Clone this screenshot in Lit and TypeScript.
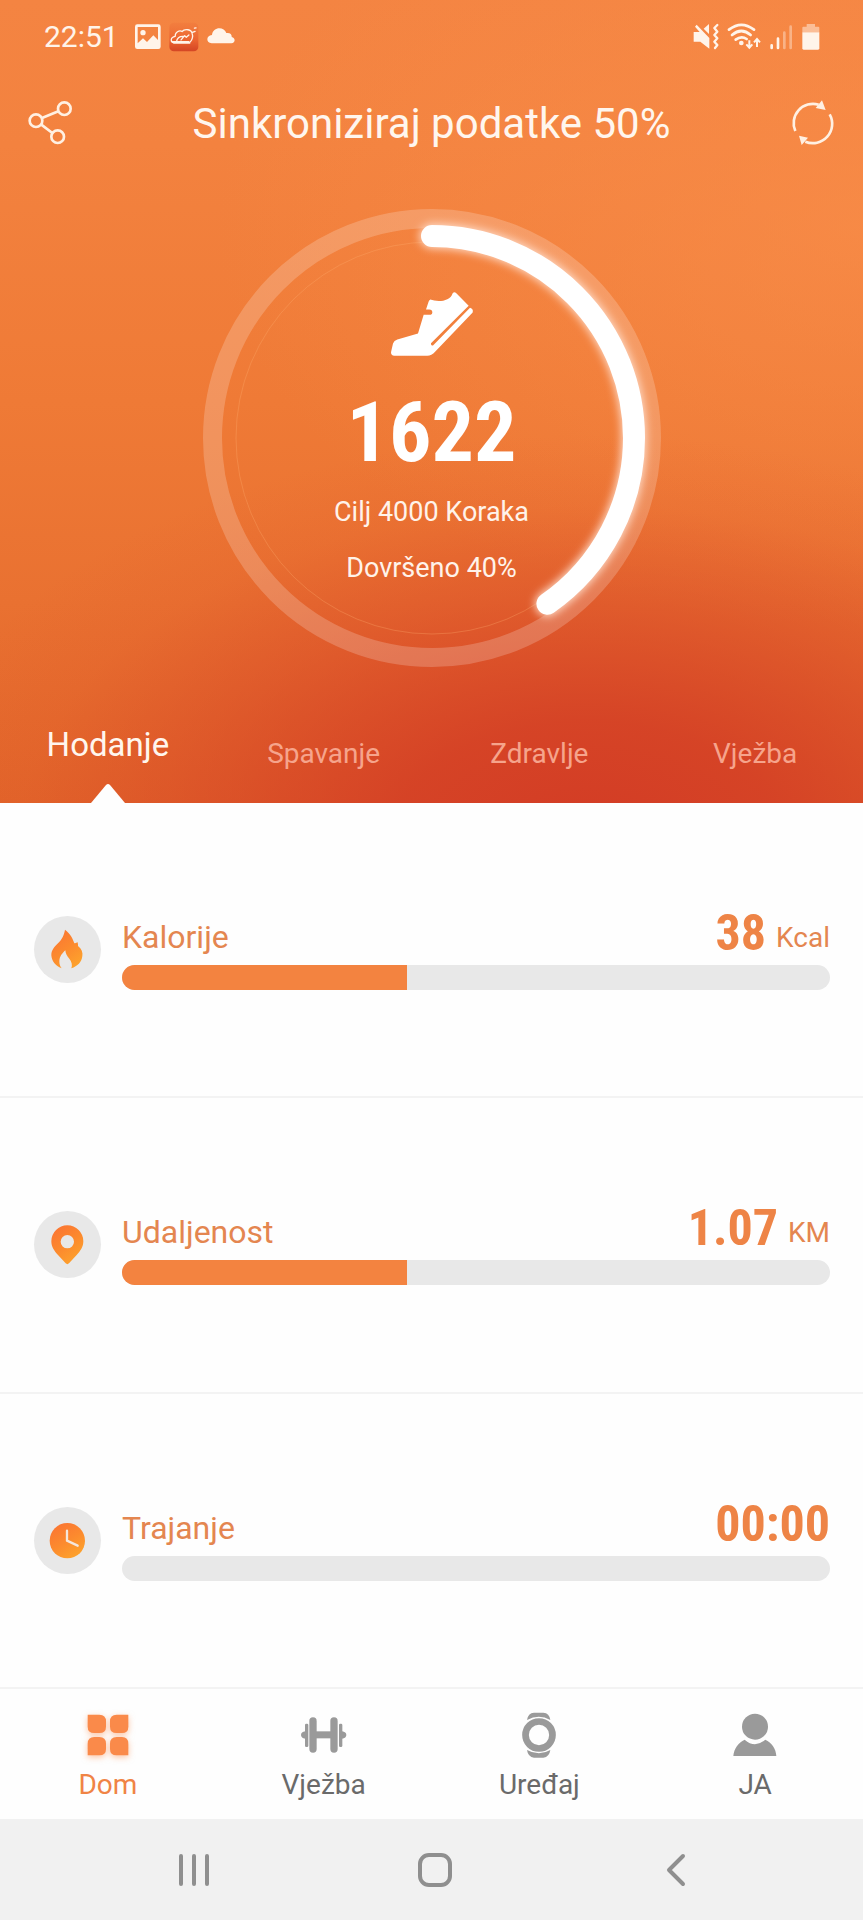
import { LitElement, html, css, svg } from "lit";
import { customElement, property, state } from "lit/decorators.js";
import { classMap } from "lit/directives/class-map.js";

const palette = css`
  :host {
    --orange: #f38340;
    --label: #e48650;
    --track: #e8e8e8;
  }
  * {
    box-sizing: border-box;
  }
  svg {
    display: block;
    flex: none;
  }
  button {
    margin: 0;
    padding: 0;
    border: 0;
    background: none;
    color: inherit;
    font: inherit;
    cursor: pointer;
  }
`;

@customElement("status-bar")
class StatusBar extends LitElement {
  static styles = [
    palette,
    css`
      :host {
        display: flex;
        justify-content: space-between;
        align-items: center;
        height: 74px;
        padding: 0 42px 0 44px;
        color: #fff4ea;
        font-size: 30px;
        line-height: 36px;
      }
      .group {
        display: flex;
        align-items: center;
        gap: 8px;
      }
      .time {
        margin-right: 8px;
      }
    `,
  ];

  render() {
    return html`
      <div class="group">
        <span class="time">22:51</span>
        <svg width="26" height="26" viewBox="401 71 78 76" aria-hidden="true">
          <path fill="#fff4ea" fill-rule="evenodd" d="M408 71H471Q478 71 478 78V138Q478 145 471 145H408Q401 145 401 138V78Q401 71 408 71ZM409 79V128L425 113L437 124L456 104L470 118V79Z" />
          <circle cx="425" cy="96" r="8" fill="#fff4ea" />
        </svg>
        <svg width="30" height="30" viewBox="508 66 92 90" aria-hidden="true">
          <defs>
            <linearGradient id="app" x1="0" y1="0" x2="0" y2="1">
              <stop offset="0" stop-color="#ee7038" stop-opacity="0.3" />
              <stop offset="0.6" stop-color="#ec6430" />
              <stop offset="1" stop-color="#d44524" />
            </linearGradient>
          </defs>
          <rect x="509" y="67" width="89" height="88" rx="14" fill="url(#app)" />
          <path fill="none" stroke="#fff4ea" stroke-width="4" stroke-linecap="round" stroke-linejoin="round" d="M571 129H523C512 127 511 112 527 109C526 96 540 89 548 94C557 84 577 88 579 100C582 108 580 120 573 126M531 125C533 113 543 108 554 109M545 120L556 107L561 112L569 105M580 97L588 94M586 84L591 83" />
          <path fill="#fff4ea" d="M514 123H570L574 131H522Z" />
        </svg>
        <svg width="28" height="20" viewBox="623 80 84 60" aria-hidden="true">
          <path fill="#fff4ea" d="M637 129C619 127 620 105 638 104C640 79 674 77 681 98C693 96 698 103 697 110C709 112 709 129 696 129Z" />
        </svg>
      </div>
      <div class="group">
        <svg width="26" height="28" viewBox="790 69 78 82" aria-hidden="true">
          <path fill="#fff4ea" d="M792 95H810L796 79L801 73L839 113V145L812 124H792ZM822 85L838 71V101Z" />
          <path fill="none" stroke="#fff4ea" stroke-width="7" stroke-linecap="round" stroke-linejoin="round" d="M863 74L854 83L863 94L854 104L863 114L854 124L863 134L856 143" />
        </svg>
        <svg width="34" height="28" viewBox="895 69 102 82" aria-hidden="true">
          <g fill="none" stroke="#fff4ea" stroke-width="8" stroke-linecap="round">
            <path d="M901 88Q938 59 976 88" />
            <path d="M910 104Q938 80 966 104" />
            <path d="M921 118Q938 105 954 116" />
          </g>
          <circle cx="938" cy="128" r="7" fill="#fff4ea" />
          <path fill="none" stroke="#fff4ea" stroke-width="6" d="M962 120V141M953 132L962 142L971 132M985 140V117M976 126L985 116L994 126" />
        </svg>
        <svg width="24" height="28" viewBox="1013 69 72 82" aria-hidden="true">
          <g stroke="#fff4ea" stroke-width="8" stroke-linecap="round">
            <path d="M1021 135V143M1040 115V143" />
            <path opacity="0.4" d="M1059 97V143M1078 79V143" />
          </g>
        </svg>
        <svg width="20" height="28" viewBox="1111 69 60 82" aria-hidden="true">
          <path fill="#fff4ea" opacity="0.5" d="M1128 71H1153V79H1163Q1166 79 1166 82V96H1115V82Q1115 79 1118 79H1128Z" />
          <path fill="#fff4ea" d="M1115 96H1166V144Q1166 148 1162 148H1119Q1115 148 1115 144Z" />
        </svg>
      </div>
    `;
  }
}

@customElement("step-ring")
class StepRing extends LitElement {
  @property({ type: Number }) steps = 0;
  @property({ type: Number }) goal = 0;
  @property({ type: Number }) percent = 0;

  static styles = [
    palette,
    css`
      :host {
        display: grid;
        width: 458px;
        max-width: 100%;
        color: #fff3ea;
      }
      .ring,
      .content {
        grid-area: 1 / 1;
      }
      .ring {
        width: 100%;
        height: auto;
        overflow: visible;
      }
      .content {
        display: flex;
        flex-direction: column;
        align-items: center;
        padding-top: 81px;
        font-size: 27px;
        line-height: 36px;
      }
      .steps {
        margin: 40px 0 25px;
        color: #fff;
        font-family: "Roboto Condensed", "Liberation Sans Narrow", Roboto, sans-serif;
        font-size: 84px;
        font-weight: 700;
        line-height: 72px;
      }
      .done {
        margin-top: 20px;
      }
    `,
  ];

  render() {
    const r = 202;
    const length = 2 * Math.PI * r;
    return html`
      <svg class="ring" viewBox="0 0 458 458" aria-hidden="true">
        <defs>
          <filter id="glow" x="-20%" y="-20%" width="140%" height="140%">
            <feGaussianBlur stdDeviation="4" />
          </filter>
        </defs>
        <circle cx="229" cy="229" r="219.5" fill="none" stroke="#fff" stroke-opacity="0.2" stroke-width="19" />
        <circle cx="229" cy="229" r="196" fill="none" stroke="#ffb070" stroke-opacity="0.3" stroke-width="1" />
        <g fill="none" stroke-linecap="round" transform="rotate(-90 229 229)" stroke-dasharray="${(length * this.percent) / 100} ${length}">
          <circle cx="229" cy="229" r="${r}" stroke="#ffd9c4" stroke-width="25" filter="url(#glow)" />
          <circle cx="229" cy="229" r="${r}" stroke="#fff" stroke-width="22" />
        </g>
      </svg>
      <div class="content">
        <svg width="84" height="67" viewBox="600 300 252 200" aria-hidden="true">
          <path fill="#fff" d="M721 328C742 336 780 335 788 309Q793 303 799 309L836 347L723 459Q722 466 729 466L840 353Q851 356 848 367L736 484Q724 497 712 497H613Q603 496 603 486L609 460Q612 451 622 448L684 430L701 374H722Q727 373 727 367Q727 358 718 358H708L716 334Q718 329 721 328Z" />
        </svg>
        <div class="steps">${this.steps}</div>
        <div>Cilj ${this.goal} Koraka</div>
        <div class="done">Dovršeno ${Math.floor(this.percent)}%</div>
      </div>
    `;
  }
}

const metricIcons = {
  flame: svg`
    <svg width="67" height="67" viewBox="101 108 201 201" aria-hidden="true">
      <path fill="url(#warm)" d="M194 149C212 163 218 178 222 190Q228 190 231 186Q234 192 233 198C244 207 248 218 246 228C244 247 232 258 213 265C217 255 214 245 207 236C200 228 196 222 195 211C186 220 178 228 177 243C177 252 179 259 184 265C165 257 154 243 153 226C153 210 163 200 173 190C186 177 191 165 194 149Z" />
    </svg>`,
  pin: svg`
    <svg width="67" height="67" viewBox="101 93 201 201" aria-hidden="true">
      <path fill="url(#warm)" fill-rule="evenodd" d="M201 136A48 48 0 0 1 249 184C249 201 240 213 229 225L206 250Q201 255 196 250L173 225C162 213 153 201 153 184A48 48 0 0 1 201 136ZM201 165A20 20 0 1 0 201 205A20 20 0 1 0 201 165Z" />
    </svg>`,
  clock: svg`
    <svg width="67" height="67" viewBox="101 978 201 201" aria-hidden="true">
      <circle cx="201" cy="1079" r="53" fill="url(#warm)" />
      <path fill="none" stroke="#f4e6dc" stroke-width="7" stroke-linecap="round" stroke-linejoin="round" d="M200 1049V1079L232 1094" />
    </svg>`,
};

@customElement("metric-row")
class MetricRow extends LitElement {
  @property() icon: keyof typeof metricIcons = "flame";
  @property() label = "";
  @property() value = "";
  @property() unit = "";
  @property({ type: Number }) percent = 0;

  static styles = [
    palette,
    css`
      :host {
        display: flex;
        align-items: center;
        gap: 21px;
        padding: 0 33px 0 34px;
        border-bottom: 2px solid #f3f3f3;
        color: var(--label);
      }
      .defs {
        width: 0;
        height: 0;
        position: absolute;
      }
      .disc {
        flex: none;
        border-radius: 50%;
        background: var(--track);
      }
      .body {
        flex: 1;
      }
      .head {
        display: flex;
        justify-content: space-between;
        align-items: center;
        height: 56px;
        font-size: 32px;
      }
      .reading {
        display: flex;
        align-items: center;
        gap: 10px;
        font-size: 28px;
      }
      .number {
        padding-bottom: 8px;
        color: #ee8446;
        font-family: "Roboto Condensed", "Liberation Sans Narrow", Roboto, sans-serif;
        font-size: 50px;
        font-weight: 700;
        line-height: 46px;
      }
      .bar {
        height: 25px;
        border-radius: 13px;
        background: var(--track);
        overflow: hidden;
      }
      .fill {
        height: 100%;
        background: var(--orange);
      }
    `,
  ];

  render() {
    return html`
      <svg class="defs" aria-hidden="true">
        <defs>
          <linearGradient id="warm" x1="0.2" y1="0" x2="0.8" y2="1">
            <stop offset="0" stop-color="#fb7533" />
            <stop offset="0.5" stop-color="#fc8a2e" />
            <stop offset="1" stop-color="#fda52c" />
          </linearGradient>
        </defs>
      </svg>
      <div class="disc">${metricIcons[this.icon]}</div>
      <div class="body">
        <div class="head">
          <span id="label">${this.label}</span>
          <span class="reading">
            <span class="number">${this.value}</span>
            ${this.unit ? html`<span>${this.unit}</span>` : ""}
          </span>
        </div>
        <div class="bar" role="progressbar" aria-labelledby="label" aria-valuenow=${this.percent}>
          <div class="fill" style="width: ${this.percent}%"></div>
        </div>
      </div>
    `;
  }
}

const navIcons = {
  home: svg`
    <svg class="glow" width="42" height="42" viewBox="261 132 126 126" aria-hidden="true">
      <g fill="#fa8a4a">
        <path d="M263 134H298Q318 134 318 154V170Q318 189 298 189H283Q263 189 263 170Z" />
        <path d="M385 134V170Q385 189 366 189H350Q330 189 330 170V154Q330 134 350 134Z" />
        <path d="M263 256V221Q263 201 283 201H298Q318 201 318 221V237Q318 256 298 256Z" />
        <path d="M385 256H350Q330 256 330 237V221Q330 201 350 201H366Q385 201 385 221Z" />
      </g>
    </svg>`,
  dumbbell: svg`
    <svg width="46" height="38" viewBox="905 137 138 114" aria-hidden="true">
      <g fill="#9a9a9a">
        <rect x="930" y="141" width="22" height="106" rx="11" />
        <rect x="993" y="141" width="22" height="106" rx="11" />
        <rect x="948" y="183" width="50" height="21" />
        <rect x="917" y="160" width="10" height="70" rx="4" />
        <rect x="1019" y="160" width="10" height="70" rx="4" />
        <path d="M918 183Q905 185 905 194Q905 203 918 205ZM1028 183Q1041 185 1041 194Q1041 203 1028 205Z" />
      </g>
    </svg>`,
  watch: svg`
    <svg width="36" height="46" viewBox="273 126 108 138" aria-hidden="true">
      <circle cx="327" cy="195" r="40.5" fill="none" stroke="#9a9a9a" stroke-width="20" />
      <path fill="#9a9a9a" d="M291 150Q294 129 312 128H340Q358 129 361 150Q327 130 291 150ZM291 240Q294 261 312 263H340Q358 261 361 240Q327 260 291 240Z" />
    </svg>`,
  person: svg`
    <svg width="44" height="44" viewBox="908 129 132 132" aria-hidden="true">
      <circle cx="974" cy="170" r="39" fill="#9a9a9a" />
      <path fill="#9a9a9a" d="M909 258C911 236 924 218 943 209Q974 236 1005 209C1024 218 1037 236 1038 258Z" />
    </svg>`,
};

@customElement("app-root")
class AppRoot extends LitElement {
  @state() private tab = "Hodanje";
  @state() private page = "Dom";

  static styles = [
    palette,
    css`
      :host {
        display: flex;
        flex-direction: column;
        min-height: 100vh;
        background: #fefefe;
        font-family: Roboto, "Noto Sans", sans-serif;
      }
      .hero {
        display: flex;
        flex-direction: column;
        background:
          radial-gradient(ellipse 80% 50% at 68% 104%, #d33c25 0%, rgba(211, 61, 37, 0.85) 28%, rgba(213, 64, 38, 0.4) 60%, rgba(220, 75, 40, 0.12) 82%, rgba(220, 75, 40, 0) 100%),
          radial-gradient(ellipse 75% 50% at 100% 28%, rgba(250, 144, 76, 0.6) 0%, rgba(250, 144, 76, 0) 100%),
          linear-gradient(#f48442 0%, #f3823f 18%, #ef7a36 50%, #e97131 75%, #e2652a 100%);
      }
      .top {
        display: flex;
        align-items: center;
        justify-content: space-between;
        height: 100px;
        padding: 0 28px;
        color: #fff6ee;
      }
      .title {
        margin: 0;
        font-size: 42px;
        font-weight: 400;
        line-height: 52px;
      }
      .ring {
        align-self: center;
        margin-top: 35px;
      }
      .tabs {
        display: grid;
        grid-template-columns: repeat(4, 1fr);
        align-items: end;
        height: 136px;
      }
      .tab {
        padding-bottom: 29px;
        color: #f6a48c;
        font-size: 28px;
        line-height: 40px;
      }
      .tab.active {
        display: flex;
        flex-direction: column;
        align-items: center;
        gap: 18px;
        padding-bottom: 0;
        color: #fff6ee;
        font-size: 33px;
      }
      .metrics {
        display: grid;
        flex: 1;
        grid-auto-rows: minmax(160px, 1fr);
      }
      .nav {
        display: grid;
        grid-template-columns: repeat(4, 1fr);
        padding: 22px 0 16px;
        background: #fefefe;
      }
      .item {
        display: flex;
        flex-direction: column;
        align-items: center;
        gap: 8px;
        color: #6a6a6a;
        font-size: 28px;
        line-height: 36px;
        text-decoration: none;
      }
      .item.active {
        color: #f08445;
      }
      .slot {
        display: grid;
        place-items: center;
        height: 48px;
      }
      .glow {
        filter: drop-shadow(0 2px 3px rgba(250, 138, 74, 0.5));
      }
      .system {
        display: grid;
        grid-template-columns: repeat(3, 1fr);
        height: 101px;
        padding: 0 66px 0 73px;
        background: #f1f1f1;
      }
      .key {
        display: grid;
        place-items: center;
      }
    `,
  ];

  private tabButton(name: string) {
    const active = this.tab === name;
    return html`
      <button class=${classMap({ tab: true, active })} role="tab" aria-selected=${active} @click=${() => (this.tab = name)}>
        <span>${name}</span>
        ${active
          ? html`<svg width="34" height="20" viewBox="0 0 34 20" aria-hidden="true"><path fill="#fefefe" d="M0 20L15 2Q17 0 19 2L34 20Z" /></svg>`
          : ""}
      </button>
    `;
  }

  private navItem(name: string, icon: keyof typeof navIcons) {
    return html`
      <a class=${classMap({ item: true, active: this.page === name })} href="#${name}" @click=${() => (this.page = name)}>
        <span class="slot">${navIcons[icon]}</span>
        <span>${name}</span>
      </a>
    `;
  }

  render() {
    return html`
      <header class="hero">
        <status-bar></status-bar>
        <div class="top">
          <button aria-label="Podijeli">
            <svg width="45" height="47" viewBox="85 302 135 141" fill="none" stroke="#fff0e2" stroke-width="8">
              <circle cx="194" cy="325" r="19" />
              <circle cx="109" cy="361" r="19" />
              <circle cx="174" cy="409" r="19" />
              <path d="M127 353L176 333M125 373L158 398" />
            </svg>
          </button>
          <h1 class="title">Sinkroniziraj podatke 50%</h1>
          <button aria-label="Sinkroniziraj">
            <svg width="45" height="49" viewBox="1080 298 135 147" fill="none" stroke="#fff0e2" stroke-width="8">
              <path d="M1096 391A58 58 0 0 1 1166 312" />
              <path d="M1199 341A58 58 0 0 1 1126 423" />
              <path fill="#fff0e2" stroke="none" d="M1176 299L1187 328L1157 322ZM1107 405L1134 411L1115 433Z" />
            </svg>
          </button>
        </div>
        <step-ring class="ring" .steps=${1622} .goal=${4000} .percent=${40.3}></step-ring>
        <div class="tabs" role="tablist">
          ${["Hodanje", "Spavanje", "Zdravlje", "Vježba"].map((name) => this.tabButton(name))}
        </div>
      </header>
      <main class="metrics">
        <metric-row icon="flame" label="Kalorije" value="38" unit="Kcal" .percent=${40.3}></metric-row>
        <metric-row icon="pin" label="Udaljenost" value="1.07" unit="KM" .percent=${40.3}></metric-row>
        <metric-row icon="clock" label="Trajanje" value="00:00" .percent=${0}></metric-row>
      </main>
      <nav class="nav">
        ${this.navItem("Dom", "home")} ${this.navItem("Vježba", "dumbbell")}
        ${this.navItem("Uređaj", "watch")} ${this.navItem("JA", "person")}
      </nav>
      <div class="system">
        <button class="key" aria-label="Nedavno">
          <svg width="32" height="34" viewBox="0 0 32 34" stroke="#8f8f8f" stroke-width="4" stroke-linecap="round">
            <path d="M3 3V31M16 3V31M29 3V31" />
          </svg>
        </button>
        <button class="key" aria-label="Početna">
          <svg width="36" height="36" viewBox="0 0 36 36" fill="none" stroke="#8f8f8f" stroke-width="4">
            <rect x="3" y="3" width="30" height="30" rx="9" />
          </svg>
        </button>
        <button class="key" aria-label="Natrag">
          <svg width="20" height="34" viewBox="0 0 20 34" fill="none" stroke="#8f8f8f" stroke-width="4" stroke-linecap="round" stroke-linejoin="round">
            <path d="M17 3L3 17L17 31" />
          </svg>
        </button>
      </div>
    `;
  }
}
